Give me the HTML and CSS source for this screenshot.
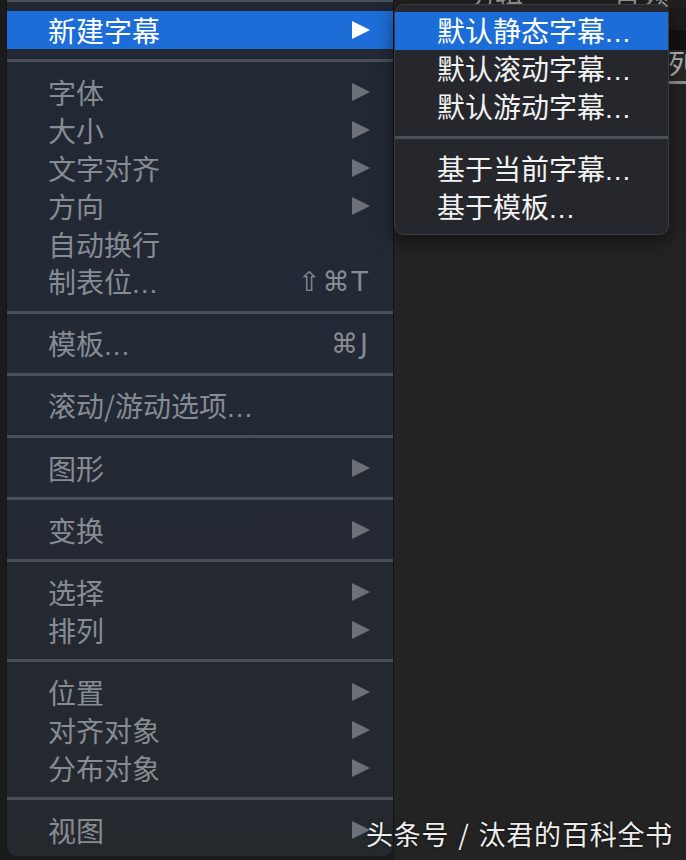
FILE: index.html
```html
<!DOCTYPE html>
<html lang="zh">
<head>
  <meta charset="UTF-8">
  <title>新建字幕菜单</title>
  <link rel="stylesheet" href="styles.css">
</head>
<body>
  <div class="screen">
    <!-- 主菜单 -->
    <div class="menu main">
      <div class="sep first"></div>
      <div class="item active"><span>新建字幕</span><i class="arrow"></i></div>
      <div class="sep"></div>
      <div class="item"><span>字体</span><i class="arrow"></i></div>
      <div class="item"><span>大小</span><i class="arrow"></i></div>
      <div class="item"><span>文字对齐</span><i class="arrow"></i></div>
      <div class="item"><span>方向</span><i class="arrow"></i></div>
      <div class="item"><span>自动换行</span></div>
      <div class="item"><span>制表位<b class="dots">...</b></span><em class="key">⇧⌘T</em></div>
      <div class="sep"></div>
      <div class="item"><span>模板<b class="dots">...</b></span><em class="key">⌘J</em></div>
      <div class="sep"></div>
      <div class="item"><span>滚动/游动选项<b class="dots">...</b></span></div>
      <div class="sep"></div>
      <div class="item"><span>图形</span><i class="arrow"></i></div>
      <div class="sep"></div>
      <div class="item"><span>变换</span><i class="arrow"></i></div>
      <div class="sep"></div>
      <div class="item"><span>选择</span><i class="arrow"></i></div>
      <div class="item"><span>排列</span><i class="arrow"></i></div>
      <div class="sep"></div>
      <div class="item"><span>位置</span><i class="arrow"></i></div>
      <div class="item"><span>对齐对象</span><i class="arrow"></i></div>
      <div class="item"><span>分布对象</span><i class="arrow"></i></div>
      <div class="sep"></div>
      <div class="item"><span>视图</span><i class="arrow"></i></div>
    </div>

    <!-- 菜单后面的窗口 -->
    <div class="backdrop">
      <div class="tabs">
        <span class="tab-edit">剪辑</span>
        <span>音频</span>
      </div>
      <div class="strip"></div>
      <div class="band"></div>
      <div class="panel-head"><span class="tab-on">列</span></div>
      <div class="panel"></div>
    </div>

    <!-- 子菜单 -->
    <div class="menu sub">
      <div class="item active"><span>默认静态字幕<b class="dots">...</b></span></div>
      <div class="item"><span>默认滚动字幕<b class="dots">...</b></span></div>
      <div class="item"><span>默认游动字幕<b class="dots">...</b></span></div>
      <div class="sep"></div>
      <div class="item"><span>基于当前字幕<b class="dots">...</b></span></div>
      <div class="item"><span>基于模板<b class="dots">...</b></span></div>
    </div>

    <div class="mark">头条号 / 汰君的百科全书</div>
  </div>
</body>
</html>
```

FILE: styles.css
```css
body {
  margin: 0;
  padding: 0;
  background-color: #1b1b1b;
}

.screen {
  position: relative;
  display: flex;
  width: 686px;
  height: 860px;
  padding-left: 6px;
  box-sizing: border-box;
  overflow: hidden;
  background-color: #1b1b1b;
  font-family: "Noto Sans CJK SC", "Noto Sans", sans-serif;
}

.menu {
  font-size: 28px;
  color: #878c93;
}

.main {
  position: relative;
  z-index: 2;
  flex: none;
  width: 388px;
  height: 856px;
  padding-bottom: 6px;
  box-sizing: border-box;
  border-left: 1px solid #121418;
  border-right: 1px solid #121418;
  border-radius: 0 0 10px 10px;
  background: linear-gradient(180deg, #212834 0%, #232935 45%, #25292e 100%);
}

.item {
  display: flex;
  align-items: center;
  justify-content: space-between;
  height: 38px;
  padding: 0 23px 0 41px;
  line-height: 38px;
}

.item.active {
  background-color: #1c6dd7;
  color: #fff;
}

.dots {
  font-weight: normal;
  font-family: "Liberation Sans", sans-serif;
  letter-spacing: 1px;
}

.arrow {
  width: 0;
  height: 0;
  border-left: 18px solid #6c7179;
  border-top: 9px solid transparent;
  border-bottom: 9px solid transparent;
}

.active .arrow {
  border-left-color: #fff;
}

.key {
  font-style: normal;
  font-family: "DejaVu Sans", "Noto Sans CJK SC", sans-serif;
  font-size: 27px;
  letter-spacing: 2px;
}

.sep {
  height: 3px;
  margin: 10px 0 11px;
  background-color: #4a5059;
}

.sep.first {
  height: 2px;
  margin: 0 0 9px;
}

.backdrop {
  display: flex;
  flex-direction: column;
  flex: 1;
  background-color: #232323;
  color: #9a9a9a;
  font-size: 28px;
}

.tabs {
  display: flex;
  flex: none;
  height: 32px;
  margin-top: -24px;
  padding-left: 73px;
  box-sizing: border-box;
  line-height: 34px;
  background-color: #202020;
}

.tabs .tab-edit {
  margin-right: 90px;
}

.strip {
  flex: none;
  height: 22px;
  background-color: #1c1c1c;
}

.band {
  flex: none;
  height: 20px;
  background-color: #121212;
}

.panel-head {
  display: flex;
  flex: none;
  height: 34px;
  padding-left: 274px;
  background-color: #262626;
  font-size: 27px;
  white-space: nowrap;
}

.tab-on {
  height: 31px;
  line-height: 26px;
  border-bottom: 3px solid #8d8d8d;
  color: #b4b4b4;
}

.panel {
  flex: 1;
  background-color: #232323;
}

.sub {
  position: absolute;
  z-index: 3;
  left: 394px;
  top: 4px;
  width: 275px;
  padding: 7px 0 8px;
  box-sizing: border-box;
  border: 1px solid #3a3c40;
  border-radius: 10px;
  background-color: #25272c;
  box-shadow: 0 6px 18px rgba(0, 0, 0, 0.5);
  color: #f2f2f2;
  overflow: hidden;
}

.sub .item {
  padding-left: 42px;
}

.mark {
  position: absolute;
  z-index: 4;
  left: 366px;
  top: 815px;
  font-size: 27px;
  line-height: 38px;
  letter-spacing: 0.8px;
  word-spacing: 2px;
  color: #ededed;
  text-shadow: 0 0 3px rgba(0, 0, 0, 0.8);
  white-space: nowrap;
}
```
